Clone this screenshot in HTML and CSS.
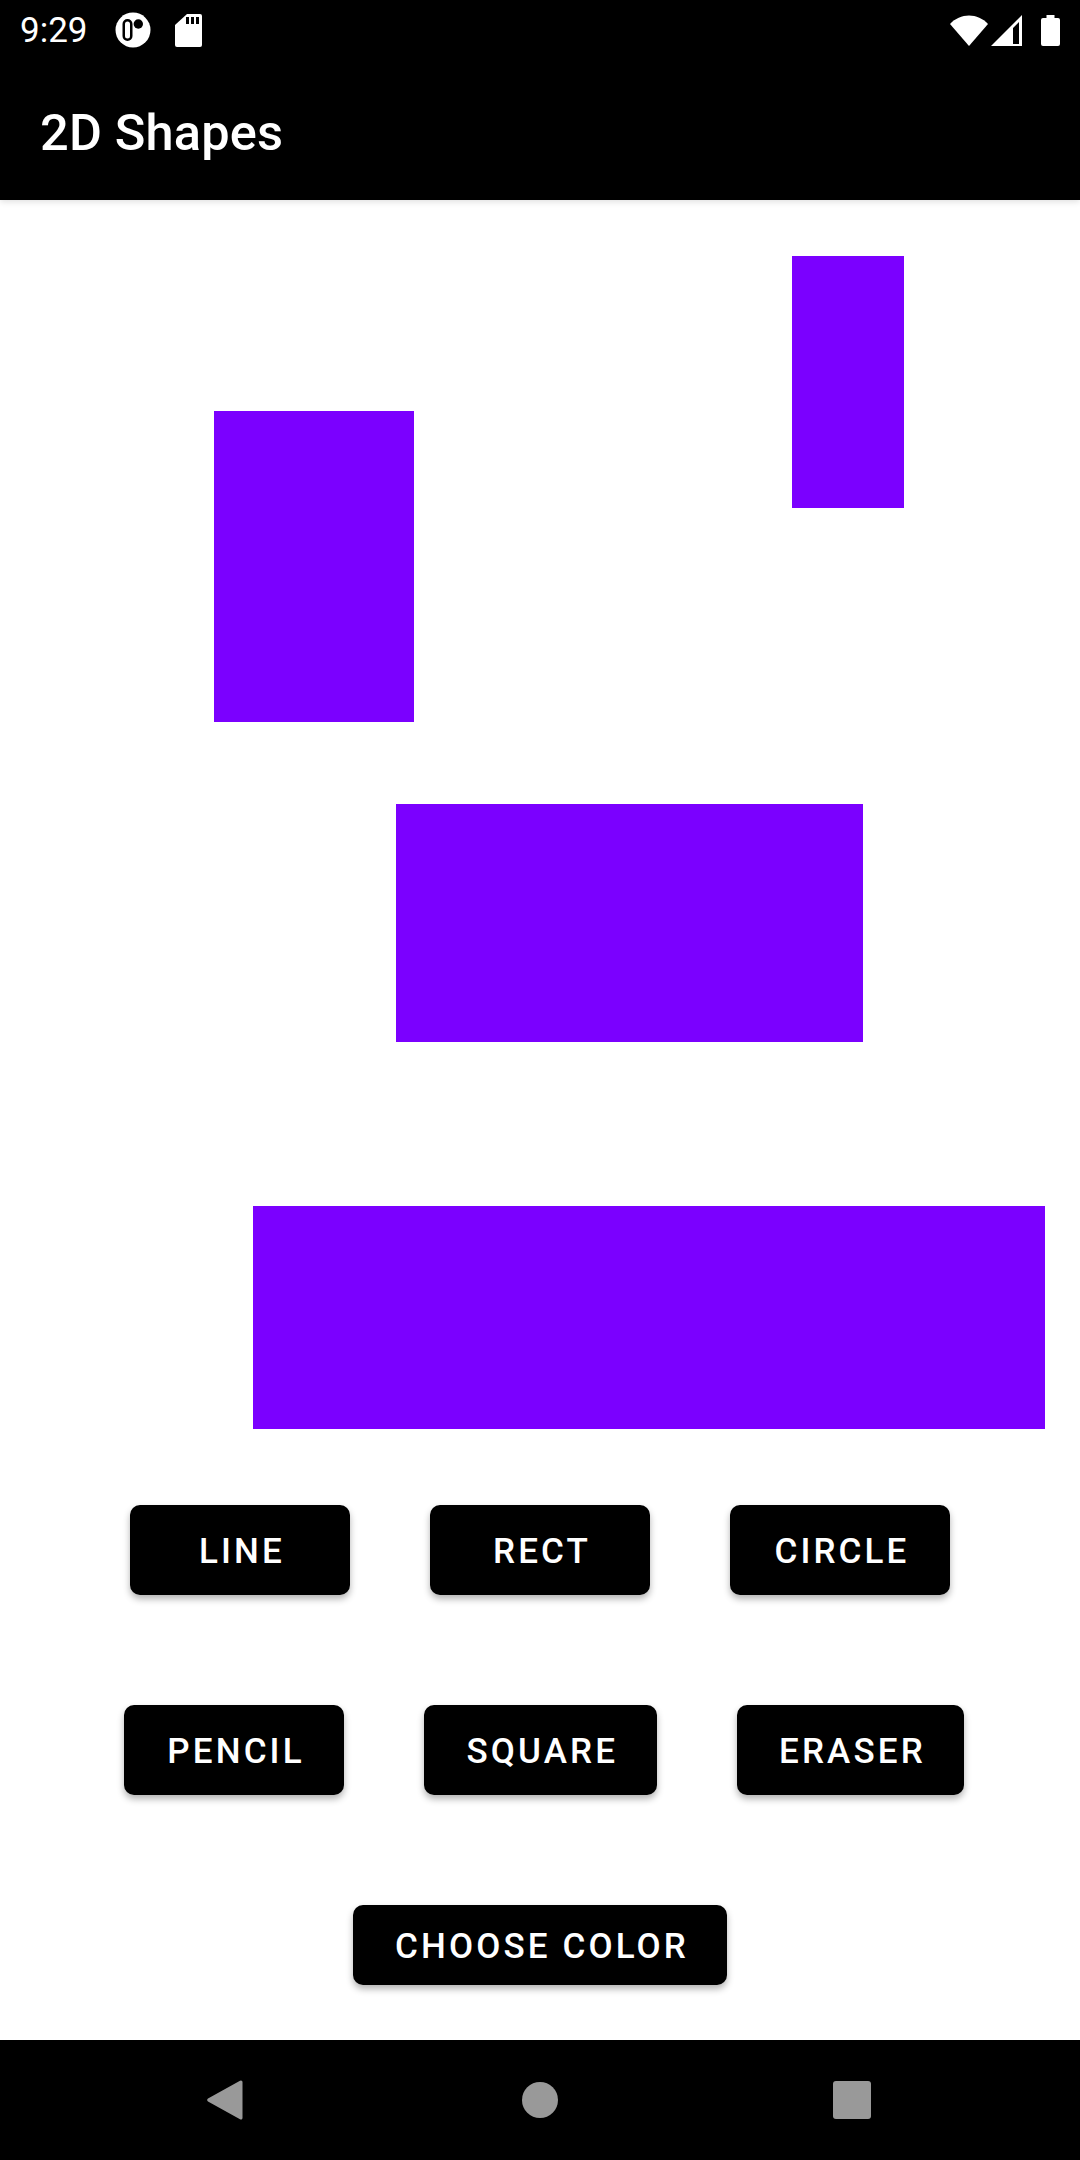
FILE: index.html
```html
<!DOCTYPE html>
<html lang="en">
<head>
    <meta charset="UTF-8">
    <title>2D Shapes</title>
    <link rel="stylesheet" href="styles.css">
</head>
<body>
    <header class="top">
        <div class="status">
            <span class="clock">9:29</span>
            <svg class="ic-cast" width="36" height="36" viewBox="0 0 36 36">
                <circle cx="18" cy="18" r="17.5" fill="#fff"/>
                <rect x="8.750" y="8.250" width="7.500" height="19.500" rx="3.750" fill="#fff" stroke="#000" stroke-width="2.500"/>
                <circle cx="23.300" cy="12" r="4.700" fill="#000"/>
            </svg>
            <svg class="ic-sd" width="27" height="33" viewBox="0 0 27 33">
                <path d="M12 0h13a2 2 0 0 1 2 2v29a2 2 0 0 1-2 2H2a2 2 0 0 1-2-2V11z" fill="#fff"/>
                <path d="M11 3h3v7h-3zM16 3h3v7h-3zM21 3h3v7h-3z" fill="#000"/>
            </svg>
            <div class="status-right">
                <svg width="38" height="31" viewBox="0 0 38 31">
                    <path d="M0 9C5 3.500 12 0.500 19 0.500S33 3.500 38 9L19 31z" fill="#fff"/>
                </svg>
                <svg class="ic-signal" width="31" height="31" viewBox="0 0 31 31">
                    <path d="M31 0v31H0zM28 7L22 13v16h6z" fill="#fff" fill-rule="evenodd"/>
                </svg>
                <svg class="ic-battery" width="19" height="31" viewBox="0 0 19 31">
                    <path d="M5.500 0h8v3h3.500a2 2 0 0 1 2 2v24a2 2 0 0 1-2 2H2a2 2 0 0 1-2-2V5a2 2 0 0 1 2-2h3.500z" fill="#fff"/>
                </svg>
            </div>
        </div>
        <h1 class="title">2D Shapes</h1>
    </header>

    <main class="canvas">
        <div class="shape" style="left:792px;top:56px;width:112px;height:252px"></div>
        <div class="shape" style="left:214px;top:211px;width:200px;height:311px"></div>
        <div class="shape" style="left:396px;top:604px;width:467px;height:238px"></div>
        <div class="shape" style="left:253px;top:1006px;width:792px;height:223px"></div>
    </main>

    <section class="tools">
        <div class="row row-one">
            <button class="btn">LINE</button>
            <button class="btn">RECT</button>
            <button class="btn">CIRCLE</button>
        </div>
        <div class="row row-two">
            <button class="btn">PENCIL</button>
            <button class="btn">SQUARE</button>
            <button class="btn">ERASER</button>
        </div>
        <div class="row row-three">
            <button class="btn btn-color">CHOOSE COLOR</button>
        </div>
    </section>

    <nav class="navbar">
        <svg width="36" height="40" viewBox="0 0 36 40">
            <path d="M34 0.500a1.500 1.500 0 0 1 1.500 1.500v36a1.500 1.500 0 0 1-2.500 1.200L1 21.500a2 2 0 0 1 0-3L33 0.800z" fill="#999"/>
        </svg>
        <svg class="nav-home" width="36" height="36" viewBox="0 0 36 36">
            <circle cx="18" cy="18" r="18" fill="#999"/>
        </svg>
        <svg class="nav-recent" width="38" height="38" viewBox="0 0 38 38">
            <rect width="38" height="38" rx="3" fill="#999"/>
        </svg>
    </nav>
</body>
</html>
```

FILE: styles.css
```css
* {
    box-sizing: border-box;
}
html, body {
    margin: 0;
    padding: 0;
}
body {
    width: 1080px;
    height: 2160px;
    display: flex;
    flex-direction: column;
    background: #fff;
    font-family: Roboto, "Liberation Sans", sans-serif;
    overflow: hidden;
}
.top {
    height: 200px;
    background: #000;
    color: #fff;
    box-shadow: 0 2px 6px rgba(0, 0, 0, .12);
}
.status {
    height: 60px;
    display: flex;
    align-items: center;
    padding: 0 20px 0 20px;
}
.clock {
    font-size: 35px;
    width: 95px;
}
.ic-sd {
    margin-left: 24px;
}
.status-right {
    margin-left: auto;
    display: flex;
    align-items: center;
}
.ic-signal {
    margin-left: 3px;
}
.ic-battery {
    margin-left: 19px;
}
.title {
    margin: 0;
    padding-left: 40px;
    font-size: 50.500px;
    font-weight: 500;
    line-height: 146px;
    letter-spacing: .2px;
}
.canvas {
    position: relative;
    height: 1285px;
}
.shape {
    position: absolute;
    background: #7b00ff;
}
.tools {
    flex: 1;
    padding-top: 20px;
}
.row {
    display: flex;
    gap: 80px;
}
.row-one {
    padding-left: 130px;
    margin-bottom: 110px;
}
.row-two {
    padding-left: 124px;
    margin-bottom: 110px;
}
.row-three {
    justify-content: center;
}
.btn {
    min-width: 220px;
    height: 90px;
    padding: 2px 38.500px 0 42.500px;
    border: 0;
    border-radius: 10px;
    background: #000;
    color: #fff;
    font-family: inherit;
    font-size: 35px;
    font-weight: 500;
    letter-spacing: 3.120px;
    box-shadow: 0 4px 7px rgba(0, 0, 0, .3);
}
.btn-color {
    height: 80px;
}
.navbar {
    height: 120px;
    background: #000;
    display: flex;
    align-items: center;
    padding-left: 207px;
}
.nav-home {
    margin-left: 279px;
}
.nav-recent {
    margin-left: 275px;
}
```
